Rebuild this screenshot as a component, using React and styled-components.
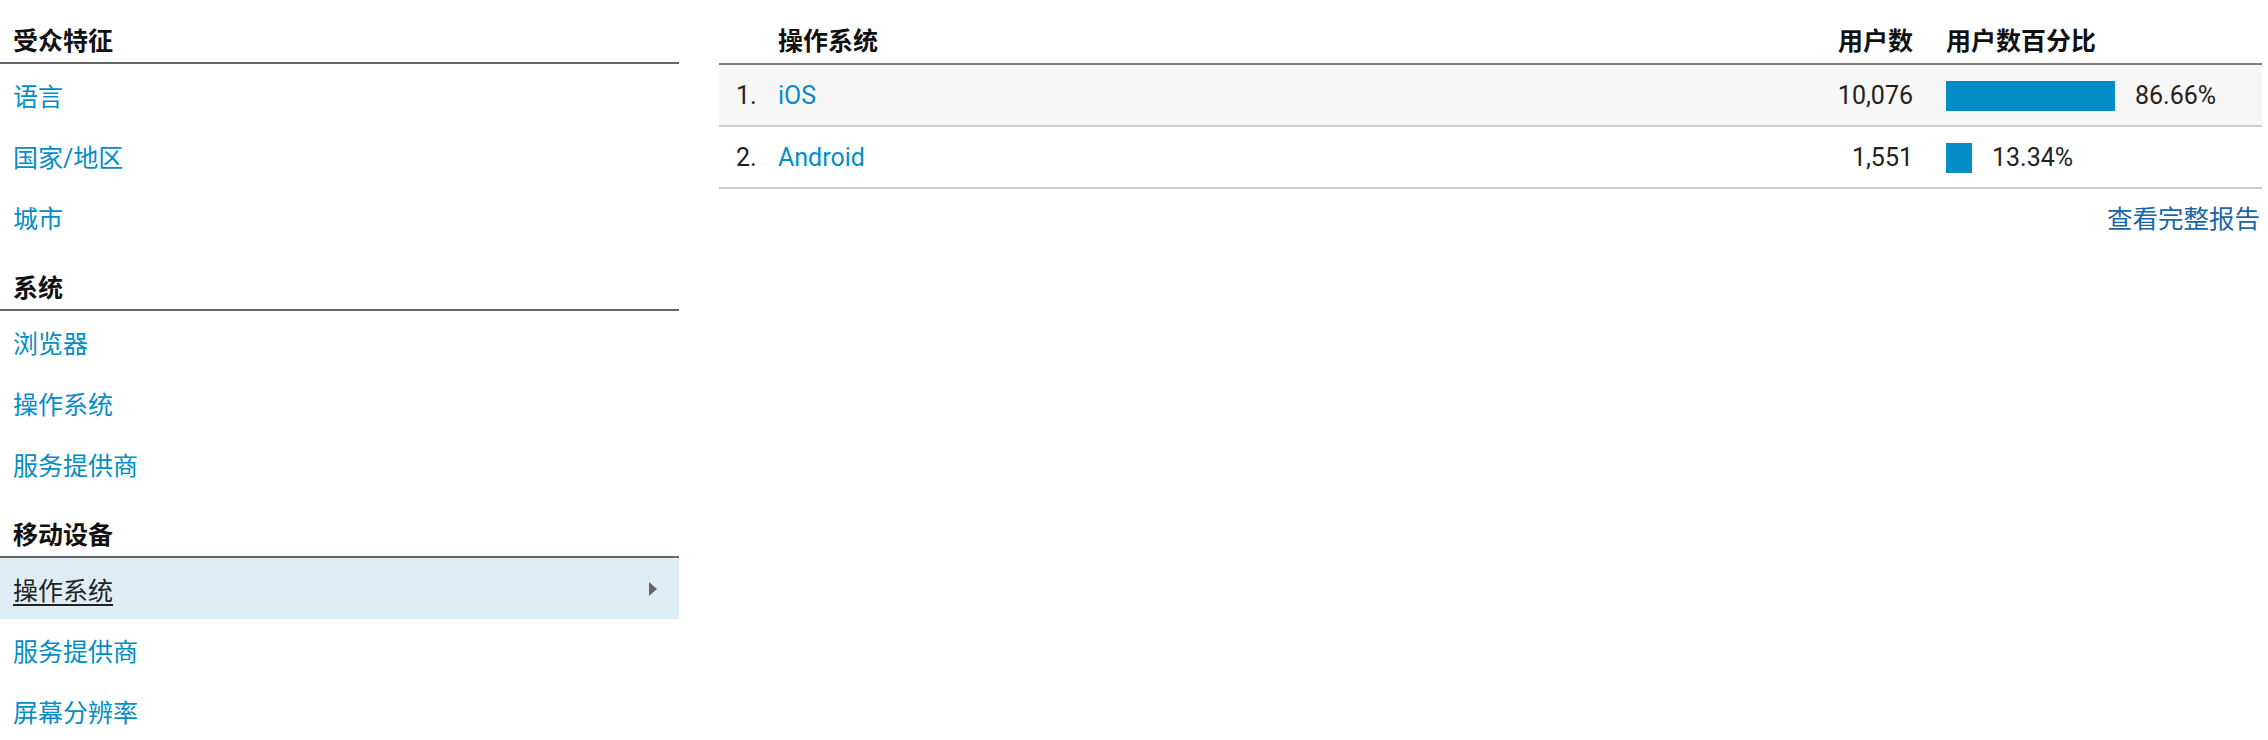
import React from "react";
import styled, {createGlobalStyle} from "styled-components";

const GlobalStyle = createGlobalStyle`
  html, body {
    margin: 0;
    padding: 0;
    background: #fff;
  }
  body {
    font-family: Roboto, "Noto Sans CJK SC", sans-serif;
    font-size: 25px;
    color: #222;
  }
`;

const Page = styled.div`
  width: 2268px;
  box-sizing: border-box;
  padding-right: 6px;
  display: grid;
  grid-template-columns: 679px 1fr;
  column-gap: 40px;
  align-items: start;
`;

const Nav = styled.div`
  display: flex;
  flex-direction: column;
`;

const NavHeading = styled.div`
  height: 64px;
  box-sizing: border-box;
  display: flex;
  align-items: flex-end;
  padding: 0 13px 5px;
  line-height: 30px;
  font-weight: bold;
  color: #111;
  border-bottom: 2px solid #666;
`;

const NavItem = styled.div`
  height: 61px;
  box-sizing: border-box;
  display: flex;
  align-items: center;
  justify-content: space-between;
  padding: 1px 22px 0 13px;
  background: ${p => (p.$active ? "#dfedf6" : "transparent")};
  color: ${p => (p.$active ? "#222" : "#058dc7")};
  text-decoration: ${p => (p.$active ? "underline" : "none")};
  text-underline-offset: 4px;
  cursor: pointer;
`;

const Arrow = styled.span`
  width: 0;
  height: 0;
  border-top: 7px solid transparent;
  border-bottom: 7px solid transparent;
  border-left: 8px solid #666;
`;

const Table = styled.div`
  display: flex;
  flex-direction: column;
`;

const Row = styled.div`
  display: grid;
  grid-template-columns: 59px 1fr 213px 316px;
  align-items: center;
  box-sizing: border-box;
  height: ${p => (p.$head ? "65px" : "62px")};
  padding-top: 2px;
  background: ${p => (p.$shaded ? "#f7f7f7" : "transparent")};
  border-bottom: 2px solid ${p => (p.$head ? "#808080" : "#ccc")};
  ${p => p.$head && `
    align-items: end;
    padding-bottom: 6px;
    font-weight: bold;
    color: #111;
  `}
  line-height: 30px;
`;

const Index = styled.div`
  padding-left: 17px;
`;

const Name = styled.div`
  color: ${p => (p.$link ? "#058dc7" : "inherit")};
`;

const Count = styled.div`
  text-align: right;
  padding-right: 33px;
`;

const Share = styled.div`
  display: flex;
  align-items: center;
  gap: 20px;
`;

const Bar = styled.div`
  height: 30px;
  background: #058dc7;
`;

const Footer = styled.div`
  display: flex;
  justify-content: flex-end;
  margin-top: 15px;
  padding-right: 2px;
  line-height: 30px;
  color: #1a66a8;
  font-size: 25.5px;
`;

const sections = [
    {title: "受众特征", items: ["语言", "国家/地区", "城市"]},
    {title: "系统", items: ["浏览器", "操作系统", "服务提供商"]},
    {title: "移动设备", items: ["操作系统", "服务提供商", "屏幕分辨率"], active: 0}
];

const rows = [
    {name: "iOS", users: "10,076", pct: 86.66},
    {name: "Android", users: "1,551", pct: 13.34}
];

const BAR_MAX = 195;

export default function App() {
    return (
        <>
            <GlobalStyle/>
            <Page>
                <Nav>
                    {sections.map(section => (
                        <React.Fragment key={section.title}>
                            <NavHeading>{section.title}</NavHeading>
                            {section.items.map((item, i) => (
                                <NavItem key={item} $active={section.active === i}>
                                    <span>{item}</span>
                                    {section.active === i && <Arrow/>}
                                </NavItem>
                            ))}
                        </React.Fragment>
                    ))}
                </Nav>
                <div>
                    <Table>
                        <Row $head>
                            <div/>
                            <Name>操作系统</Name>
                            <Count>用户数</Count>
                            <div>用户数百分比</div>
                        </Row>
                        {rows.map((r, i) => (
                            <Row key={r.name} $shaded={i === 0}>
                                <Index>{i + 1}.</Index>
                                <Name $link>{r.name}</Name>
                                <Count>{r.users}</Count>
                                <Share>
                                    <Bar style={{width: Math.round(BAR_MAX * r.pct / 100) + "px"}}/>
                                    <span>{r.pct.toFixed(2)}%</span>
                                </Share>
                            </Row>
                        ))}
                    </Table>
                    <Footer>查看完整报告</Footer>
                </div>
            </Page>
        </>
    );
}
